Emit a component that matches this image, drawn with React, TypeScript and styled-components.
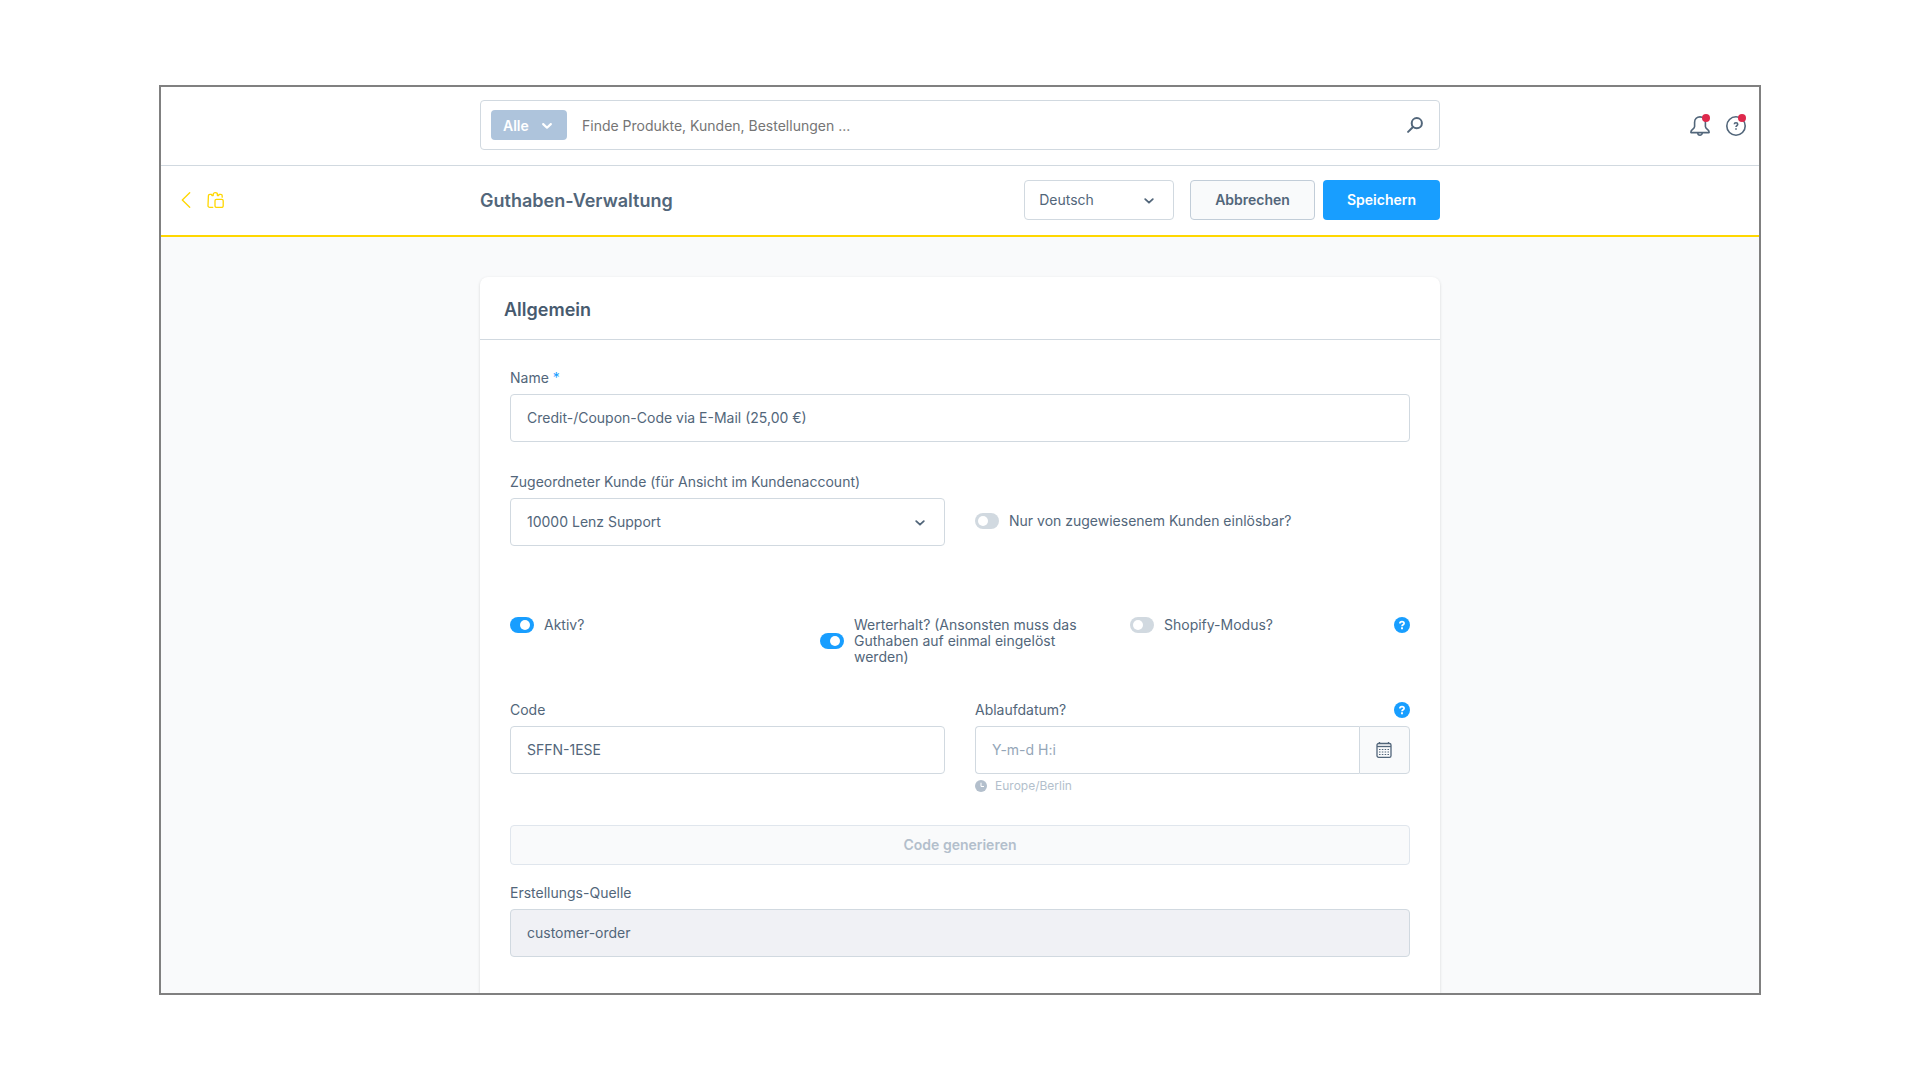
import React from "react";
import styled, { createGlobalStyle } from "styled-components";

const color = {
  text: "#52667a",
  heading: "#475a6e",
  border: "#d1d9e0",
  muted: "#b3bfcc",
  surface: "#f9fafb",
  primary: "#189eff",
  module: "#ffd700",
  danger: "#de294c",
};

const GlobalStyle = createGlobalStyle`
  *, *::before, *::after { box-sizing: border-box; }
  body {
    margin: 0;
    background: #fff;
    color: ${color.text};
    font-family: Inter, "Liberation Sans", sans-serif;
    font-size: 14px;
    line-height: 16px;
  }
  input, select, button { font: inherit; color: inherit; }
`;

const Stage = styled.div`
  height: 100vh;
  padding: 85px 159px;
`;

const Frame = styled.div`
  height: 100%;
  display: flex;
  flex-direction: column;
  overflow: hidden;
  border: 2px solid #808080;
`;

const Bar = styled.div`
  display: grid;
  grid-template-columns: 1fr minmax(0, 960px) 1fr;
  align-items: center;
  flex-shrink: 0;
  background: #fff;
`;

const TopBar = styled(Bar).attrs({ as: "header" })`
  padding: 13px 0 15px;
  border-bottom: 1px solid ${color.border};
`;

const SmartBar = styled(Bar)`
  padding: 14px 0 15px;
  border-bottom: 2px solid ${color.module};
`;

const Search = styled.form`
  grid-column: 2;
  display: flex;
  align-items: center;
  height: 50px;
  padding: 0 10px;
  border: 1px solid ${color.border};
  border-radius: 4px;
`;

const ScopeButton = styled.button`
  display: flex;
  align-items: center;
  justify-content: space-between;
  width: 76px;
  height: 30px;
  padding: 2px 15px 0 12px;
  border: 0;
  border-radius: 4px;
  background: #aec4dc;
  color: #fff;
  font-weight: 600;
`;

const SearchInput = styled.input`
  flex: 1;
  min-width: 0;
  height: 30px;
  padding: 0 15px;
  border: 0;
  background: none;
  &::placeholder { color: #757575; opacity: 1; }
`;

const PlainButton = styled.button`
  display: flex;
  padding: 0;
  border: 0;
  background: none;
`;

const SearchButton = styled(PlainButton)`
  padding: 0 6px;
`;

const Actions = styled.div`
  display: flex;
  justify-content: flex-end;
  gap: 16px;
  padding: 2px 13px 0 0;
`;

const NotifyButton = styled(PlainButton)`
  position: relative;
`;

const Dot = styled.span`
  position: absolute;
  top: -2px;
  right: 0;
  width: 8px;
  height: 8px;
  border-radius: 50%;
  background: ${color.danger};
`;

const Back = styled.nav`
  display: flex;
  align-items: center;
  gap: 16px;
  padding-left: 20px;
  color: ${color.module};
  a { display: flex; color: inherit; }
`;

const TitleRow = styled.div`
  display: flex;
  align-items: center;
`;

const Title = styled.h1`
  flex: 1;
  margin: 0;
  padding-top: 2px;
  font-size: 18px;
  line-height: 24px;
  font-weight: 600;
`;

const SelectBox = styled.div`
  position: relative;
  display: flex;
`;

const Caret = styled.span`
  position: absolute;
  top: 0;
  bottom: 0;
  right: 20px;
  display: flex;
  align-items: center;
  padding-top: 2px;
  pointer-events: none;
`;

const SelectInput = styled.select<{ $compact?: boolean }>`
  appearance: none;
  width: ${(p) => (p.$compact ? "150px" : "100%")};
  height: ${(p) => (p.$compact ? "40px" : "48px")};
  padding: 0 ${(p) => (p.$compact ? "14px" : "16px")};
  border: 1px solid ${color.border};
  border-radius: 4px;
  background: #fff;
`;

const Button = styled.button<{ $primary?: boolean }>`
  height: 40px;
  padding: 0 24px;
  border: ${(p) => (p.$primary ? "0" : "1px solid #c2cdd8")};
  border-radius: 4px;
  background: ${(p) => (p.$primary ? color.primary : color.surface)};
  color: ${(p) => (p.$primary ? "#fff" : color.text)};
  font-weight: 600;
  &:disabled { border-color: #e0e6ed; color: ${color.muted}; }
`;

const Buttons = styled.div`
  display: flex;
  gap: 8px;
  margin-left: 16px;
`;

const Content = styled.main`
  flex: 1;
  display: grid;
  grid-template-columns: minmax(0, 960px);
  justify-content: center;
  padding-top: 40px;
  background: ${color.surface};
`;

const Card = styled.section`
  background: #fff;
  border-radius: 8px 8px 0 0;
  box-shadow: 0 1px 3px rgba(0, 0, 0, 0.15);
`;

const CardHeader = styled.div`
  padding: 21px 24px 17px;
  border-bottom: 1px solid ${color.border};
  h2 {
    margin: 0;
    color: ${color.heading};
    font-size: 18px;
    line-height: 24px;
    font-weight: 600;
  }
`;

const CardBody = styled.form`
  padding: 30px;
`;

const Row = styled.div<{ $columns?: number; $space?: number }>`
  display: grid;
  grid-template-columns: repeat(${(p) => p.$columns ?? 1}, minmax(0, 1fr));
  column-gap: 30px;
  align-items: start;
  margin-top: ${(p) => p.$space ?? 0}px;
`;

const FieldHead = styled.div`
  display: flex;
  align-items: center;
  justify-content: space-between;
  height: 16px;
  margin-bottom: 8px;
`;

const Required = styled.span`
  color: ${color.primary};
`;

const TextInput = styled.input`
  display: block;
  width: 100%;
  height: 48px;
  padding: 0 16px 2px;
  border: 1px solid ${color.border};
  border-radius: 4px;
  background: #fff;
  &::placeholder { color: #94a6b8; opacity: 1; }
  &:disabled { background: #f0f1f5; color: inherit; }
`;

const DateGroup = styled.div`
  display: flex;
  ${TextInput} {
    flex: 1;
    min-width: 0;
    border-right: 0;
    border-radius: 4px 0 0 4px;
  }
`;

const CalendarButton = styled.button`
  display: flex;
  align-items: center;
  justify-content: center;
  width: 51px;
  height: 48px;
  padding: 0 1px 0 0;
  border: 1px solid ${color.border};
  border-radius: 0 4px 4px 0;
  background: ${color.surface};
`;

const Hint = styled.div`
  display: flex;
  align-items: center;
  gap: 8px;
  margin-top: 6px;
  color: ${color.muted};
  font-size: 12px;
  line-height: 12px;
`;

const SwitchField = styled.div<{ $beside?: boolean }>`
  display: flex;
  align-items: center;
  gap: 10px;
  padding-top: ${(p) => (p.$beside ? "39px" : "0")};
  label { flex: 1; }
`;

const SwitchInput = styled.input.attrs({ type: "checkbox", role: "switch" })`
  appearance: none;
  display: flex;
  align-items: center;
  flex-shrink: 0;
  width: 24px;
  height: 16px;
  margin: 0;
  padding: 0 3px;
  border-radius: 8px;
  background: ${color.border};
  &::before {
    content: "";
    width: 10px;
    height: 10px;
    border-radius: 50%;
    background: #fff;
  }
  &:checked {
    justify-content: flex-end;
    padding-right: 4px;
    background: ${color.primary};
  }
`;

const FullButton = styled(Button)`
  width: 100%;
`;

const ChevronDown = ({ bold }: { bold?: boolean }) => (
  <svg width="10" height="6" viewBox="0 0 10 6" fill="none" stroke="currentColor" strokeWidth={bold ? 2.2 : 1.8} strokeLinecap="round" strokeLinejoin="round" aria-hidden="true">
    <path d="M1.2 1.1 5 4.7l3.8-3.6" />
  </svg>
);

const SearchIcon = () => (
  <svg width="16" height="16" viewBox="0 0 16 16" fill="none" stroke="currentColor" strokeWidth="2" strokeLinecap="round" aria-hidden="true">
    <circle cx="9.8" cy="6.2" r="5.1" />
    <path d="M6 10 1.100 14.900" />
  </svg>
);

const BellIcon = () => (
  <svg width="20" height="20" viewBox="0 0 20 20" fill="none" stroke="currentColor" strokeWidth="1.6" strokeLinejoin="round" aria-hidden="true">
    <path d="M10 .9C6.9.9 4.6 3.2 4.6 6.3v4.2c0 2.5-3.7 3.3-3.7 5.4v.7h18.200v-.7c0-2.100-3.700-2.900-3.700-5.400V6.300C15.400 3.200 13.100.9 10 .9z" />
    <path d="M7.800 17a2.200 2.200 0 0 0 4.400 0" />
  </svg>
);

const HelpOutlineIcon = () => (
  <svg width="20" height="20" viewBox="0 0 20 20" fill="none" stroke="currentColor" strokeWidth="1.6" aria-hidden="true">
    <circle cx="10" cy="10" r="9.2" />
    <path d="M8.300 8.300C8.300 7.300 9 6.800 10 6.800s1.700.6 1.700 1.500c0 1.200-1.700 1.300-1.700 2.800" />
    <path d="M10 12.200v1.600" />
  </svg>
);

const HelpIcon = () => (
  <svg width="16" height="16" viewBox="0 0 16 16" fill="none" aria-hidden="true">
    <circle cx="8" cy="8" r="8" fill={color.primary} />
    <path d="M5.900 6.500C5.900 5.300 6.800 4.700 8 4.700s2.100.7 2.100 1.700c0 1.400-2.100 1.400-2.100 2.800" stroke="#fff" strokeWidth="1.700" />
    <path d="M8 10.300v1.900" stroke="#fff" strokeWidth="1.900" />
  </svg>
);

const BackIcon = () => (
  <svg width="10" height="16" viewBox="0 0 10 16" fill="none" stroke="currentColor" strokeWidth="1.300" strokeLinecap="round" strokeLinejoin="round" aria-hidden="true">
    <path d="M8.700.7 1.300 8l7.400 7.300" />
  </svg>
);

const ClipboardIcon = () => (
  <svg width="17" height="16" viewBox="0 0 17 16" fill="none" stroke="currentColor" strokeWidth="1.300" strokeLinecap="round" strokeLinejoin="round" aria-hidden="true">
    <path d="M5.800 15.300H2.700c-1 0-1.700-.6-1.700-1.600L1.400 4c0-1 .6-1.700 1.500-1.700h1.700l.3 1.200h1.300V2.400c0-1 .8-1.700 2.100-1.700s2.100.7 2.100 1.700v1.100h1.300l.3-1.200h1.700c.9 0 1.500.6 1.500 1.500v1.400" />
    <rect x="8" y="7.400" width="8.200" height="8" rx="1.400" />
  </svg>
);

const CalendarIcon = () => (
  <svg width="16" height="16" viewBox="0 0 16 16" fill="none" stroke="currentColor" aria-hidden="true">
    <rect x="1" y="1.500" width="14" height="13.800" rx="1.600" strokeWidth="1.300" />
    <path d="M1 4.500h14" strokeWidth="1.300" />
    <path d="M3.500 0v2M12.500 0v2" strokeWidth="1.300" />
    <path d="M3 7.500h10M3 10h10M3 12.500h10" strokeWidth="1.200" strokeDasharray="1.500 1.330" />
  </svg>
);

const ClockIcon = () => (
  <svg width="12" height="12" viewBox="0 0 12 12" fill="none" aria-hidden="true">
    <circle cx="6" cy="6" r="6" fill="currentColor" />
    <path d="M6 2.700v3.800h3" stroke="#fff" strokeWidth="1" />
  </svg>
);

type SwitchProps = { id: string; label: string; on?: boolean; beside?: boolean; help?: boolean };

const Switch = ({ id, label, on, beside, help }: SwitchProps) => (
  <SwitchField $beside={beside}>
    <SwitchInput id={id} defaultChecked={on} />
    <label htmlFor={id}>{label}</label>
    {help && <Help />}
  </SwitchField>
);

const Help = () => (
  <PlainButton type="button" aria-label="Hilfe">
    <HelpIcon />
  </PlainButton>
);

type FieldProps = { id: string; label: string; required?: boolean; help?: boolean; children: React.ReactNode };

const Field = ({ id, label, required, help, children }: FieldProps) => (
  <div>
    <FieldHead>
      <label htmlFor={id}>
        {label}
        {required && <Required> *</Required>}
      </label>
      {help && <Help />}
    </FieldHead>
    {children}
  </div>
);

export default function App() {
  return (
    <Stage>
      <GlobalStyle />
      <Frame>
        <TopBar>
          <Search role="search">
            <ScopeButton type="button">
              Alle
              <ChevronDown bold />
            </ScopeButton>
            <SearchInput aria-label="Suche" placeholder="Finde Produkte, Kunden, Bestellungen ..." />
            <SearchButton type="button" aria-label="Suchen">
              <SearchIcon />
            </SearchButton>
          </Search>
          <Actions>
            <NotifyButton type="button" aria-label="Benachrichtigungen">
              <BellIcon />
              <Dot />
            </NotifyButton>
            <NotifyButton type="button" aria-label="Hilfe">
              <HelpOutlineIcon />
              <Dot />
            </NotifyButton>
          </Actions>
        </TopBar>

        <SmartBar>
          <Back>
            <a href="#back" aria-label="Zurück">
              <BackIcon />
            </a>
            <ClipboardIcon />
          </Back>
          <TitleRow>
            <Title>Guthaben-Verwaltung</Title>
            <SelectBox>
              <SelectInput $compact aria-label="Sprache">
                <option>Deutsch</option>
              </SelectInput>
              <Caret>
                <ChevronDown />
              </Caret>
            </SelectBox>
            <Buttons>
              <Button type="button">Abbrechen</Button>
              <Button type="button" $primary>
                Speichern
              </Button>
            </Buttons>
          </TitleRow>
        </SmartBar>

        <Content>
          <Card>
            <CardHeader>
              <h2>Allgemein</h2>
            </CardHeader>
            <CardBody>
              <Row>
                <Field id="name" label="Name" required>
                  <TextInput id="name" defaultValue="Credit-/Coupon-Code via E-Mail (25,00 €)" />
                </Field>
              </Row>

              <Row $columns={2} $space={32}>
                <Field id="customer" label="Zugeordneter Kunde (für Ansicht im Kundenaccount)">
                  <SelectBox>
                    <SelectInput id="customer">
                      <option>10000 Lenz Support</option>
                    </SelectInput>
                    <Caret>
                      <ChevronDown />
                    </Caret>
                  </SelectBox>
                </Field>
                <Switch id="assigned-only" label="Nur von zugewiesenem Kunden einlösbar?" beside />
              </Row>

              <Row $columns={3} $space={71}>
                <Switch id="active" label="Aktiv?" on />
                <Switch id="keep-value" label="Werterhalt? (Ansonsten muss das Guthaben auf einmal eingelöst werden)" on />
                <Switch id="shopify" label="Shopify-Modus?" help />
              </Row>

              <Row $columns={2} $space={37}>
                <Field id="code" label="Code">
                  <TextInput id="code" defaultValue="SFFN-1ESE" />
                </Field>
                <Field id="expires" label="Ablaufdatum?" help>
                  <DateGroup>
                    <TextInput id="expires" placeholder="Y-m-d H:i" />
                    <CalendarButton type="button" aria-label="Kalender öffnen">
                      <CalendarIcon />
                    </CalendarButton>
                  </DateGroup>
                  <Hint>
                    <ClockIcon />
                    Europe/Berlin
                  </Hint>
                </Field>
              </Row>

              <Row $space={33}>
                <FullButton type="button" disabled>
                  Code generieren
                </FullButton>
              </Row>

              <Row $space={20}>
                <Field id="source" label="Erstellungs-Quelle">
                  <TextInput id="source" defaultValue="customer-order" disabled />
                </Field>
              </Row>
            </CardBody>
          </Card>
        </Content>
      </Frame>
    </Stage>
  );
}
